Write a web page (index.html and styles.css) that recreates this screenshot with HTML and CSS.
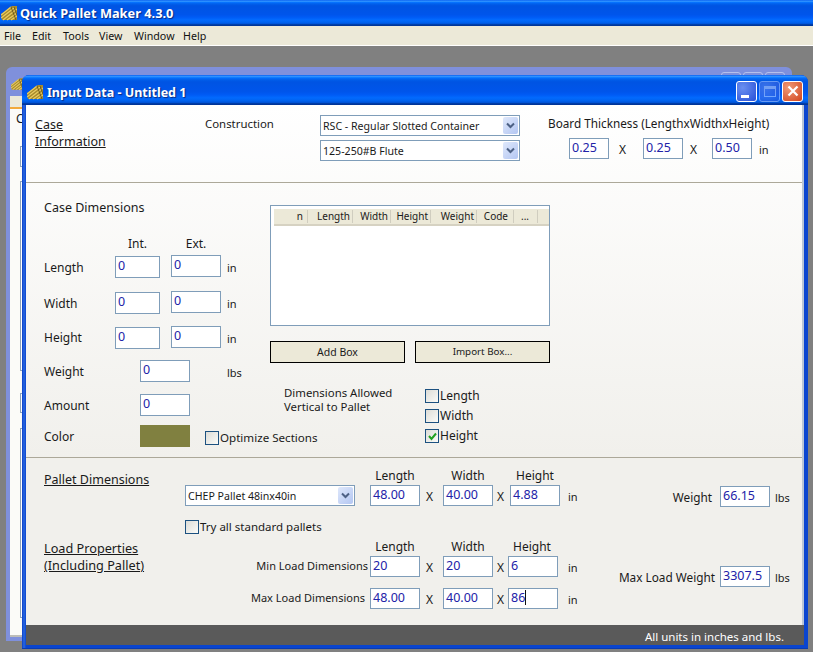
FILE: index.html
```html
<!DOCTYPE html>
<html lang="en">
<head>
<meta charset="utf-8">
<title>Quick Pallet Maker 4.3.0</title>
<link rel="stylesheet" href="styles.css">
</head>
<body>
<svg class="sprites" width="0" height="0" aria-hidden="true">
  <symbol id="pallet" viewBox="0 0 16 16">
    <path d="M0 9 L11 1 L16 1 L16 15 L1 15 Z" fill="#a88a2c"/>
    <path d="M0 10 L10 2 M0 13 L13 3 M2 15 L16 4 M6 15 L16 8 M10 15 L16 11" stroke="#e8cc62" stroke-width="1.3" fill="none"/>
    <path d="M10 2 L15 15 M13 2 L16 10" stroke="#6d5a20" stroke-width="1" fill="none"/>
  </symbol>
  <symbol id="chev" viewBox="0 0 9 7">
    <path d="M1 1.5 L4.5 5 L8 1.5" stroke="#4d6185" stroke-width="2" fill="none"/>
  </symbol>
</svg>

<header class="app-title"><svg class="app-icon"><use href="#pallet"/></svg><span>Quick Pallet Maker 4.3.0</span></header>
<nav class="menu"><span>File</span><span>Edit</span><span>Tools</span><span>View</span><span>Window</span><span>Help</span></nav>

<main class="desktop">
  <div class="win back">
    <div class="back-title">
      <svg class="back-icon"><use href="#pallet"/></svg>
      <div class="back-ctls"><i></i><i></i><i></i></div>
    </div>
    <div class="back-strip"></div>
    <div class="back-client">
      <span class="back-c">C</span>
      <span class="ghost gh1"></span>
      <span class="ghost gh2"></span>
      <span class="ghost gh3"></span>
      <span class="ghost gh4"></span>
    </div>
  </div>

  <div class="win front">
    <div class="win-title">
      <svg class="win-icon"><use href="#pallet"/></svg>
      <span class="win-name">Input Data - Untitled 1</span>
      <span class="ctl ctl-min"><i></i></span>
      <span class="ctl ctl-max"><i></i></span>
      <span class="ctl ctl-close">
        <svg viewBox="0 0 12 12" width="12" height="12"><path d="M1.5 1.5 L10.5 10.5 M10.5 1.5 L1.5 10.5" stroke="#fff" stroke-width="2.2"/></svg>
      </span>
    </div>

    <div class="client">
      <section class="sec case-info">
        <h2 class="heading ci-head">Case <br>Information</h2>
        <div class="ci-con">Construction</div>
        <div class="ci-selects">
          <div class="select s200"><span>RSC - Regular Slotted Container</span><b><svg><use href="#chev"/></svg></b></div>
          <div class="select s200"><span>125-250#B Flute</span><b><svg><use href="#chev"/></svg></b></div>
        </div>
        <div class="ci-board">
          <div class="board-label">Board Thickness (LengthxWidthxHeight)</div>
          <div class="board-row">
            <span class="field f40">0.25</span><span class="x x34">X</span>
            <span class="field f40">0.25</span><span class="x x29">X</span>
            <span class="field f40">0.50</span><span class="unit">in</span>
          </div>
        </div>
      </section>

      <section class="sec case-dim">
        <div class="cd-left">
          <div class="cd-title">Case Dimensions</div>
          <div class="cd-grid">
            <span></span><span class="colhead">Int.</span><span></span><span class="colhead">Ext.</span><span></span>

            <span class="lab low">Length</span><span class="field low">0</span><span></span><span class="field">0</span><span class="unit low">in</span>
            <span class="lab low">Width</span><span class="field low">0</span><span></span><span class="field">0</span><span class="unit low">in</span>
            <span class="lab">Height</span><span class="field low">0</span><span></span><span class="field">0</span><span class="unit low">in</span>

            <span class="lab">Weight</span><div class="wide"><span class="field f50">0</span></div><span class="unit low">lbs</span>
            <span class="lab">Amount</span><div class="wide"><span class="field f50">0</span></div><span></span>
            <span class="lab">Color</span>
            <div class="wide color-row"><span class="swatch"></span><label class="check opt"><i class="box"></i>Optimize Sections</label></div>
          </div>
        </div>

        <div class="cd-mid">
          <div class="list">
            <div class="list-head">
              <span class="c1">n</span><span class="c2">Length</span><span class="c3">Width</span><span class="c4">Height</span><span class="c5">Weight</span><span class="c6">Code</span><span class="c7">...</span>
            </div>
          </div>
          <div class="btns"><span class="btn">Add Box</span><span class="btn btn-import">Import Box...</span></div>
          <div class="vertical">
            <div class="v-text">Dimensions Allowed<br>Vertical to Pallet</div>
            <div class="v-checks">
              <label class="check"><i class="box"></i>Length</label>
              <label class="check"><i class="box"></i>Width</label>
              <label class="check"><i class="box"><svg viewBox="0 0 11 11" width="11" height="11"><path d="M2 5 L4.5 8 L9 2.5" stroke="#21a121" stroke-width="2" fill="none"/></svg></i>Height</label>
            </div>
          </div>
        </div>
      </section>

      <section class="sec pallet">
        <div class="p-grid">
          <h2 class="heading p-head">Pallet Dimensions</h2>
          <span class="colhead r1 g3">Length</span><span class="colhead r1 g5">Width</span><span class="colhead r1 g7">Height</span>

          <div class="select s170 r2 g2"><span>CHEP Pallet 48inx40in</span><b><svg><use href="#chev"/></svg></b></div>
          <span class="field r2 g3">48.00</span><span class="x r2 g4">X</span>
          <span class="field r2 g5">40.00</span><span class="x r2 g6">X</span>
          <span class="field r2 g7">4.88</span><span class="unit r2 g8">in</span>

          <label class="check try"><i class="box"></i>Try all standard pallets</label>

          <h2 class="heading l-head">Load Properties <br>(Including Pallet)</h2>
          <span class="colhead r4 g3">Length</span><span class="colhead r4 g5">Width</span><span class="colhead r4 g7 shift">Height</span>

          <span class="lab right r5 g2">Min Load Dimensions</span>
          <span class="field r5 g3">20</span><span class="x r5 g4">X</span>
          <span class="field r5 g5">20</span><span class="x r5 g6">X</span>
          <span class="field r5 g7 shift">6</span><span class="unit r5 g8">in</span>

          <span class="lab right r7 g2 far">Max Load Dimensions</span>
          <span class="field r7 g3">48.00</span><span class="x r7 g4">X</span>
          <span class="field r7 g5">40.00</span><span class="x r7 g6">X</span>
          <span class="field r7 g7 shift">86<em class="caret"></em></span><span class="unit r7 g8">in</span>
        </div>

        <div class="p-right">
          <div class="wt wt1"><span class="lab">Weight</span><span class="field">66.15</span><span class="unit">lbs</span></div>
          <div class="wt wt2"><span class="lab">Max Load Weight</span><span class="field">3307.5</span><span class="unit">lbs</span></div>
        </div>
      </section>

      <footer class="status">All units in inches and lbs.</footer>
    </div>
  </div>
</main>
</body>
</html>
```

FILE: styles.css
```css
* { box-sizing: border-box; }
html, body { margin: 0; height: 100%; }
body {
  width: 813px; height: 652px; overflow: hidden;
  background: #808080; display: flex; flex-direction: column;
  font: 12.5px "Noto Sans", "Liberation Sans", sans-serif; color: #1a1a1a;
}
.sprites { position: absolute; }

.app-title {
  height: 26px; flex: none; display: flex; align-items: center; padding-left: 1px; gap: 3px;
  background: linear-gradient(#0058ee 0, #3593ff 4%, #288eff 6%, #127dff 8%, #036ffc 10%, #0262ee 14%, #0057e5 20%, #0054e3 24%, #0055eb 56%, #005bf5 66%, #026afe 76%, #0062ef 86%, #0052d6 92%, #0040ab 94%, #003092 100%);
  color: #fff; font-weight: 700; font-size: 12.8px; text-shadow: 1px 1px 1px #0a2a80;
}
.app-icon { width: 16px; height: 16px; }
.menu {
  height: 20px; flex: none; display: flex; align-items: center; background: #ece9d8; border-bottom: 1px solid #fff;
  font-size: 10.7px; color: #111; padding-left: 4px;
}
.menu span:nth-child(1) { width: 28px; }
.menu span:nth-child(2) { width: 31px; }
.menu span:nth-child(3) { width: 36px; }
.menu span:nth-child(4) { width: 35px; }
.menu span:nth-child(5) { width: 49px; }

.desktop { position: relative; flex: 1; background: #808080; }
.win { position: absolute; display: flex; flex-direction: column; }

.back {
  left: 6px; top: 21px; width: 786px; height: 574px; background: #7f90dc; border-radius: 6px 6px 0 0;
  padding: 0 4px 4px;
}
.back-title { height: 29px; flex: none; padding: 10px 3px 0 1px; display: flex; justify-content: space-between; align-items: flex-start; }
.back-title i { display: block; width: 20px; height: 20px; border: 1px solid #b5c0ec; border-radius: 3px; margin-left: 2px; margin-top: -5px; }
.back-ctls { display: flex; }
.back-icon { width: 13px; height: 14px; display: block; }
.back-strip { height: 11px; flex: none; background: #ece9d8; }
.back-client {
  flex: 1; background: #fbfbf8; border-top: 2px solid #f2a93b; border-bottom: 2px solid #bdbdb8;
  padding: 3px 0 0 6px; display: flex; flex-direction: column; align-items: flex-start;
}
.back-c { font-size: 12px; height: 20px; line-height: 14px; }
.ghost { display: block; width: 40px; margin-left: 4px; border: 1px solid #8ea3bb; background: #fff; }
.gh1 { height: 21px; margin-top: 14px; }
.gh2 { height: 190px; margin-top: 14px; }
.gh3 { height: 20px; margin-top: 22px; }
.gh4 { height: 190px; margin-top: 15px; }

.front {
  left: 22px; top: 29px; width: 786px; height: 574px; border-radius: 7px 7px 0 0;
  background: linear-gradient(90deg, #0a3fc8 0, #2a68e0 2px, #0a45d0 4px, #0a45d0 100%);
  padding: 0 4px 4px 4px; box-shadow: inset 0 -1px #0a3bb0;
}
.win-title {
  height: 30px; flex: none; margin: 0 -4px; padding: 4px 5px 0 5px; border-radius: 7px 7px 0 0;
  display: flex; align-items: center; color: #fff;
  background: linear-gradient(#0058ee 0, #3593ff 4%, #288eff 6%, #127dff 8%, #036ffc 10%, #0262ee 14%, #0057e5 20%, #0054e3 24%, #0055eb 56%, #005bf5 66%, #026afe 76%, #0062ef 86%, #0052d6 92%, #0040ab 94%, #003092 100%);
}
.win-icon { width: 16px; height: 16px; margin-right: 4px; flex: none; }
.win-name { flex: 1; font-weight: 700; font-size: 12.5px; text-shadow: 1px 1px 1px #0a2a80; }
.ctl {
  width: 21px; height: 21px; margin-left: 2px; margin-top: -2px; border: 1px solid #fff; border-radius: 3px; flex: none; position: relative;
  background: radial-gradient(circle at 30% 30%, #6a8ff0, #2750d8); display: flex; align-items: center; justify-content: center;
}
.ctl-min i { position: absolute; left: 4px; bottom: 3px; width: 8px; height: 3px; background: #fff; }
.ctl-max { opacity: .55; border-color: #bcd0ff; }
.ctl-max i { width: 12px; height: 11px; border: 1px solid #cfdcff; border-top-width: 3px; }
.ctl-close { background: radial-gradient(circle at 30% 30%, #ef9a78, #d2441c); }

.client {
  flex: 1; display: flex; flex-direction: column;
  background: linear-gradient(#fff, #f1f0ec 65%);
  border-right: 2px solid #b9c5d6;
}
.sec { display: flex; flex: none; }
.case-info { height: 78px; border-bottom: 1px solid #aca899; }
.case-dim { height: 275px; border-bottom: 1px solid #aca899; }
.pallet { flex: 1; }

.heading { margin: 0; font: inherit; text-decoration: underline; line-height: 17px; }

.lab, .unit, .colhead, .x { line-height: 24px; white-space: nowrap; font-size: 12px; }
.unit { font-size: 11px; }

.field {
  display: block; width: 50px; height: 22px; border: 1px solid #7f9db9; background: #fff; color: #2222a8;
  padding-left: 2px; line-height: 18px; white-space: nowrap;
}
.f40 { width: 40px; }
.f50 { width: 50px; }
.low { margin-top: 1px; }
.caret { display: inline-block; width: 1px; height: 15px; background: #111; vertical-align: -3px; }

.select {
  height: 21px; display: flex; align-items: center; justify-content: space-between;
  background: #fff; border: 1px solid #7f9db9; font-size: 10.6px; padding: 0 1px 0 2px; white-space: nowrap;
}
.select b {
  width: 15px; height: 17px; background: linear-gradient(135deg, #dfe8fb, #b3c6f2); border-radius: 2px;
  display: flex; align-items: center; justify-content: center;
}
.select svg { width: 9px; height: 7px; display: block; }
.s200 { width: 200px; }
.s170 { width: 170px; }

.check { display: flex; align-items: center; white-space: nowrap; gap: 1px; line-height: 14px; font-size: 12px; }
.box {
  width: 14px; height: 14px; flex: none; border: 1px solid #1c5180; display: flex; align-items: center; justify-content: center;
  background: linear-gradient(135deg, #dcdcd7, #fbfbf8);
}

/* case information */
.ci-head { width: 170px; margin: 11px 0 0 9px; flex: none; }
.ci-con { width: 115px; margin-top: 11px; flex: none; line-height: 15px; font-size: 11.4px; }
.ci-selects { width: 228px; flex: none; padding-top: 10px; display: flex; flex-direction: column; gap: 4px; }
.ci-board { flex: 1; padding-top: 10px; }
.board-label { line-height: 17px; font-size: 11.75px; white-space: nowrap; }
.board-row { display: flex; margin: 6px 0 0 21px; }
.board-row .field { height: 21px; line-height: 17px; }
.x34 { width: 34px; padding-left: 10px; }
.x29 { width: 29px; padding-left: 7px; }
.board-row .unit { margin-left: 7px; }

/* case dimensions */
.cd-left { width: 244px; flex: none; padding: 16px 0 0 18px; }
.cd-title { height: 16px; line-height: 18px; }
.cd-grid {
  display: grid; margin-top: 20px;
  grid-template-columns: 71px 45px 11px 50px 49px;
  grid-template-rows: 20px 36px 35px 34px 34px 31px 22px;
}
.cd-grid .field:nth-child(n) { width: 100%; }
.cd-grid .wide .field { width: 50px; }
.colhead { text-align: center; line-height: 18px; }
.cd-grid .unit { padding-left: 6px; }
.wide { grid-column: 2 / 5; padding-left: 25px; }
.color-row { display: flex; align-items: center; gap: 15px; grid-column: 2 / 6; }
.swatch { width: 50px; height: 22px; background: #808040; flex: none; }
.opt { margin-top: 3px; font-size: 11.6px; }

.cd-mid { width: 280px; flex: none; padding-top: 22px; }
.list { height: 121px; background: #fff; border: 1px solid #7f9db9; padding: 3px 0 0 3px; }
.list-head {
  display: flex; height: 17px; width: 275px; background: #ece9d8; border-bottom: 2px solid #d6d2c2;
  font-size: 10px; white-space: nowrap;
}
.list-head span { border-right: 1px solid #d0cdbf; text-align: right; height: 13px; margin-top: 1px; line-height: 13px; padding-right: 2px; }
.list-head .c1 { width: 34px; padding-right: 4px; }
.list-head .c2 { width: 45px; }
.list-head .c3 { width: 38px; }
.list-head .c4 { width: 40px; }
.list-head .c5 { width: 46px; }
.list-head .c6 { width: 37px; padding-right: 5px; }
.list-head .c7 { width: 24px; padding-right: 8px; }

.btns { display: flex; justify-content: space-between; margin-top: 15px; }
.btn {
  width: 135px; height: 22px; background: #ece9d8; border: 1px solid #000; border-right-width: 1.5px;
  text-align: center; line-height: 20px; font-size: 10.5px;
}
.btn-import { font-size: 9.8px; }
.vertical { display: flex; margin-top: 26px; padding-left: 14px; }
.v-text { width: 141px; line-height: 14px; margin-top: -3px; font-size: 11.4px; }
.v-checks { display: flex; flex-direction: column; gap: 6px; }

/* pallet + load */
.p-grid {
  display: grid; padding: 10px 0 0 18px; width: 592px; flex: none;
  grid-template-columns: 141px 185px 50px 23px 50px 17px 50px 32px;
  grid-template-rows: 17px 21px 33px 17px 21px 11px 21px;
  align-content: start;
}
.r1 { grid-row: 1; }
.r2 { grid-row: 2; }
.r4 { grid-row: 4; }
.r5 { grid-row: 5; }
.r7 { grid-row: 7; }
.g2 { grid-column: 2; }
.g3 { grid-column: 3; }
.g4 { grid-column: 4; }
.g5 { grid-column: 5; }
.g6 { grid-column: 6; }
.g7 { grid-column: 7; }
.g8 { grid-column: 8; }
.p-grid .field { height: 21px; line-height: 17px; }
.p-grid .colhead { line-height: 17px; margin-top: -1px; }
.p-grid .colhead.shift { margin-left: -3px; margin-right: 3px; }
.p-grid .x { padding-left: 6px; }
.p-grid .x.g6 { padding-left: 4px; }
.p-grid .unit { padding-left: 8px; }
.p-head { grid-column: 1; grid-row: 1 / 3; margin-top: 3px; }
.try { grid-column: 2 / 9; grid-row: 3; align-self: start; margin-top: 14px; font-size: 11.5px; }
.l-head { grid-column: 1; grid-row: 4 / 8; margin-top: 1px; font-size: 12.7px; }
.right { text-align: right; padding-right: 2px; line-height: 20px; font-size: 11px; }
.far { padding-right: 5px; }
.shift { margin-left: -2px; }

.p-right { flex: 1; padding-top: 28px; padding-left: 1px; }
.wt { display: flex; justify-content: flex-end; width: 182px; height: 22px; }
.wt .lab { font-size: 11.8px; line-height: 22px; }
.wt .field { margin-left: 5px; height: 21px; line-height: 17px; flex: none; }
.wt1 .field { margin-left: 8px; }
.wt .unit { width: 31px; padding-left: 5px; flex: none; }
.wt2 { margin-top: 58px; }

.status {
  height: 20px; flex: none; margin-right: -2px; background: #5a5a5a; color: #fff; text-align: right;
  padding-right: 20px; line-height: 23px; font-size: 11.5px;
}
```
